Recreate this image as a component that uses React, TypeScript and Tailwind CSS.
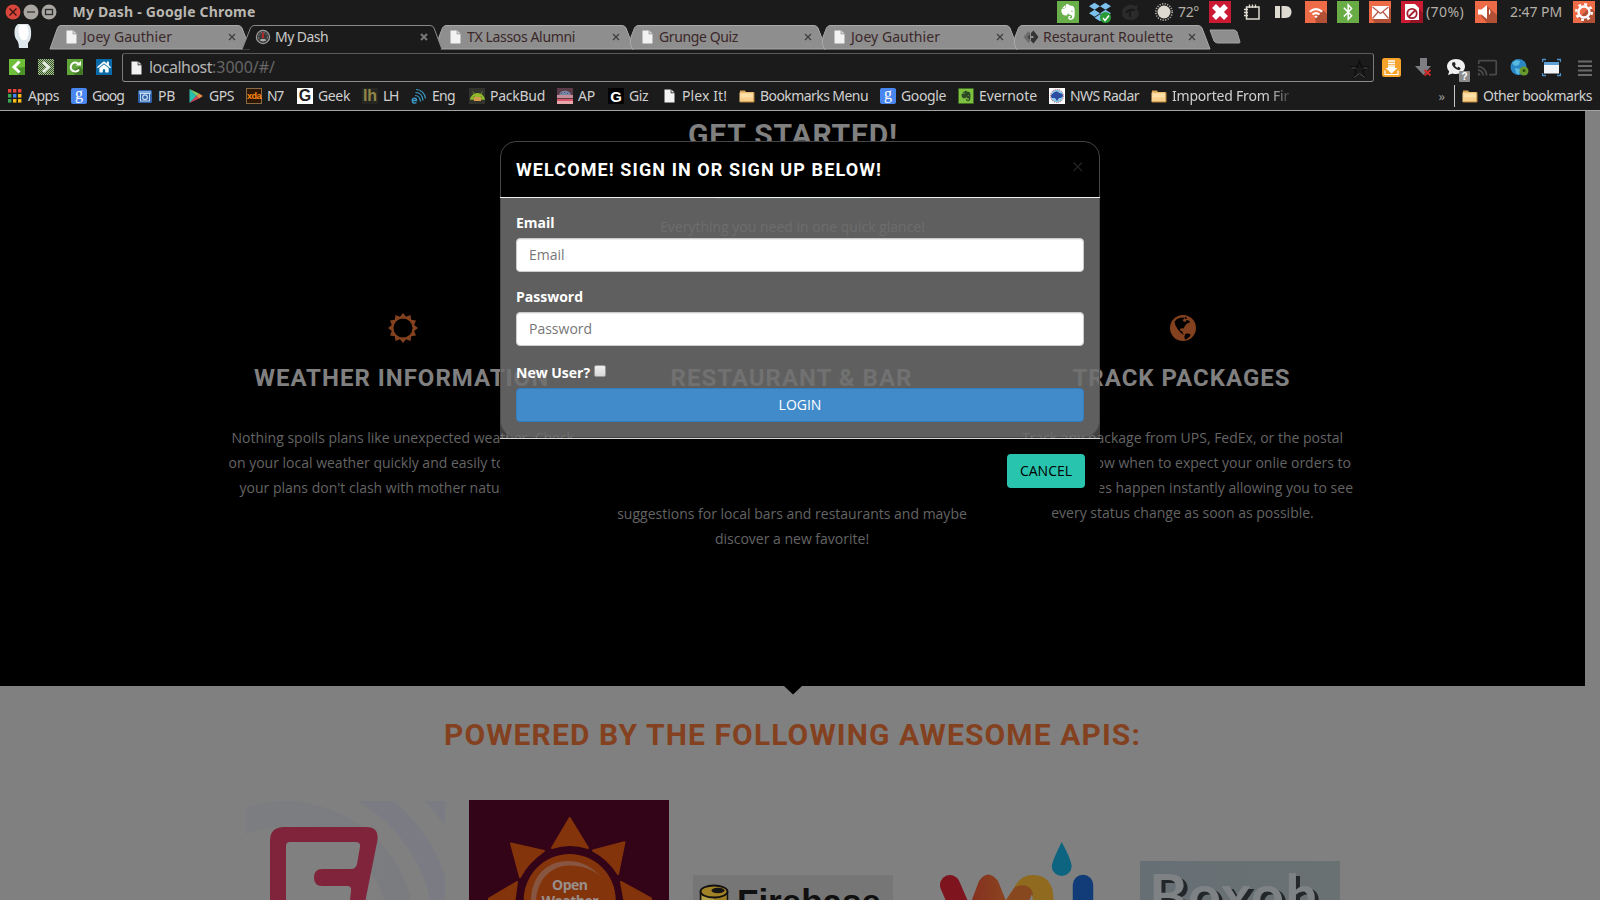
import { useLayoutEffect, useRef, type ReactNode } from "react";
import {
  FaAndroid,
  FaBluetoothB,
  FaDropbox,
  FaEvernote,
  FaHome,
  FaWhatsapp,
} from "react-icons/fa";
import { MdCast } from "react-icons/md";

/* Text whose letter spacing is adjusted so that it fills a given width. */
function Fit({ w, children, className = "" }: { w: number; children: string; className?: string }) {
  const ref = useRef<HTMLSpanElement>(null);
  useLayoutEffect(() => {
    const el = ref.current;
    if (!el) return;
    el.style.letterSpacing = "0px";
    const natural = el.getBoundingClientRect().width;
    el.style.letterSpacing = `${(w - natural) / children.length}px`;
  }, [w, children]);
  return (
    <span ref={ref} className={`inline-block shrink-0 whitespace-pre ${className}`}>
      {children}
    </span>
  );
}

function Doc({ className = "" }: { className?: string }) {
  return (
    <svg viewBox="0 0 11 14" className={`h-[14px] w-[11px] shrink-0 ${className}`}>
      <path d="M0.5 0.5h6.2v3.8h3.8v9.2h-10z" fill="#f2f2f2" />
      <path d="M7.4 0.4l3.2 3.2H7.4z" fill="#d8d8d8" />
    </svg>
  );
}

function Folder() {
  return (
    <svg viewBox="0 0 16 16" className="size-4 shrink-0">
      <path d="M1 2.5h5l1 1.5h7.5v9.500H1z" fill="#d9a558" />
      <path d="M0.500 4.500h14.500v9.500H0.500z" fill="#f9d08b" />
      <path d="M1.500 5.500h12.500v4H1.500z" fill="#fde0a8" />
      <path d="M15 4.500v9.500H1" stroke="#b98236" fill="none" />
    </svg>
  );
}

function GoogleIcon() {
  return (
    <span className="flex size-4 items-center justify-center rounded-[2px] bg-[#4a86f0] pb-[5px] font-['Liberation_Serif',serif] text-[16px] leading-none text-white">
      g
    </span>
  );
}

const appDots = ["#e8453c", "#e8453c", "#e8453c", "#3aa757", "#4285f4", "#f9bc15", "#3aa757", "#f9bc15", "#f9bc15"];

const bookmarks: { label: string; w: number; box: string; icon: ReactNode }[] = [
  {
    label: "Apps", w: 31, box: "w-[64px]",
    icon: (
      <svg viewBox="0 0 16 16" className="size-4">
        {appDots.map((c, i) => (
          <rect key={i} x={1 + (i % 3) * 5} y={1 + Math.floor(i / 3) * 5} width="3.400" height="3.600" fill={c} />
        ))}
      </svg>
    ),
  },
  { label: "Goog", w: 32, box: "w-[66px]", icon: <GoogleIcon /> },
  {
    label: "PB", w: 17, box: "w-[51px]",
    icon: (
      <svg viewBox="0 0 16 16" className="size-4">
        <rect x="1" y="2" width="14" height="13" rx="1.500" fill="#2f62a8" />
        <rect x="2" y="3" width="12" height="3" fill="#7fa8da" />
        <rect x="3.500" y="5.500" width="9" height="7.500" fill="none" stroke="#c4dcf5" />
        <circle cx="8" cy="9.300" r="2.400" fill="none" stroke="#c4dcf5" strokeWidth="1.200" />
      </svg>
    ),
  },
  {
    label: "GPS", w: 25, box: "w-[58px]",
    icon: (
      <svg viewBox="0 0 16 16" className="size-4">
        <path d="M1.500 1v14l7-7z" fill="#2bbfb0" />
        <path d="M1.500 1l7 7 2.500-2.400z" fill="#7dd36a" />
        <path d="M1.500 15l7-7 2.500 2.400z" fill="#d6435f" />
        <path d="M11 5.600L8.500 8l2.500 2.400 4-2.400z" fill="#e8894a" />
      </svg>
    ),
  },
  {
    label: "N7", w: 16, box: "w-[51px]",
    icon: <span className="flex size-4 items-center justify-center border border-[#8a6a42] bg-[#2d1703] font-['Liberation_Sans',sans-serif] text-[9px] font-bold tracking-[-0.5px] text-[#ff8a10]">xda</span>,
  },
  {
    label: "Geek", w: 32, box: "w-[65px]",
    icon: <span className="flex size-4 items-center justify-center bg-white font-['Liberation_Sans',sans-serif] text-[16px] leading-none font-bold text-[#222]">G</span>,
  },
  {
    label: "LH", w: 15, box: "w-[49px]",
    icon: <span className="flex size-4 items-center justify-center bg-[#262622] font-['Liberation_Sans',sans-serif] text-[16px] leading-none font-bold text-[#8f8647]">lh</span>,
  },
  {
    label: "Eng", w: 23, box: "w-[58px]",
    icon: (
      <svg viewBox="0 0 16 16" className="size-4" fill="none" stroke="#3a9cc8">
        <path d="M1.300 12.500h4.200c0-3-4.300-3.200-4.300 0 0 3 3 2.900 4.200 2" strokeWidth="1.400" />
        <path d="M4 7.500c3 0 5 2 5.500 6M4.500 4.500c4 0 7 3 7.500 8M5 1.500c5 0 9 4 9.500 9" strokeWidth="1.200" />
      </svg>
    ),
  },
  {
    label: "PackBud", w: 55, box: "w-[88px]",
    icon: (
      <span className="relative flex size-4 items-center justify-center bg-[#33332e]">
        <FaAndroid className="size-[15px] text-[#8fb82a]" />
        <span className="absolute top-[9px] left-[5px] h-[4px] w-[7px] bg-[#d69a4c]" />
      </span>
    ),
  },
  {
    label: "AP", w: 17, box: "w-[51px]",
    icon: (
      <svg viewBox="0 0 16 16" className="size-4">
        <rect width="16" height="16" fill="#5b3b48" />
        <path d="M2 8c0-7 12-7 12 0z" fill="#7885a3" />
        <path d="M4 5h1v1H4zM7 4h1v1H7zM10 5h1v1h-1z" fill="#45506b" />
        <rect y="7" width="16" height="3" fill="#c58d99" />
        <rect y="11" width="16" height="2" fill="#d9556a" />
        <rect y="13" width="16" height="3" fill="#e7a9ae" />
      </svg>
    ),
  },
  {
    label: "Giz", w: 19, box: "w-[53px]",
    icon: <span className="flex size-4 items-center justify-center bg-black font-['Liberation_Sans',sans-serif] text-[15px] leading-none font-bold text-white">G</span>,
  },
  { label: "Plex It!", w: 45, box: "w-[78px]", icon: <span className="flex w-4 justify-center"><Doc /></span> },
  { label: "Bookmarks Menu", w: 108, box: "w-[141px]", icon: <Folder /> },
  { label: "Google", w: 45, box: "w-[78px]", icon: <GoogleIcon /> },
  {
    label: "Evernote", w: 58, box: "w-[91px]",
    icon: (
      <span className="flex size-4 items-center justify-center rounded-[1px] border border-[#3f6d20] bg-[#7fc241]">
        <FaEvernote className="size-3 text-[#2d4a26]" />
      </span>
    ),
  },
  {
    label: "NWS Radar", w: 69, box: "w-[102px]",
    icon: (
      <svg viewBox="0 0 16 16" className="size-4">
        <rect width="16" height="16" fill="#fff" />
        <circle cx="8" cy="8" r="6.500" fill="#8fcbe8" stroke="#d5505a" strokeDasharray="1 1" />
        <path d="M2 8.500c0-2.500 2.500-3 3-4 1.500-1.500 4.500-1 5 .5 2.500 0 4 1 4 3l-2 2H10L8 13 6 10H3z" fill="#2b4ca0" />
      </svg>
    ),
  },
  { label: "Imported From Fir", w: 117, box: "w-[139px] [mask-image:linear-gradient(to_right,#000_118px,transparent_144px)]", icon: <Folder /> },
];

const tabs = [
  { label: "Joey Gauthier", w: 89, icon: "doc" },
  { label: "My Dash", w: 53, icon: "dash" },
  { label: "TX Lassos Alumni", w: 108, icon: "doc" },
  { label: "Grunge Quiz", w: 79, icon: "doc" },
  { label: "Joey Gauthier", w: 89, icon: "doc" },
  { label: "Restaurant Roulette", w: 130, icon: "diamond" },
];

function TabIcon({ kind }: { kind: string }) {
  if (kind === "doc") return <span className="flex w-[17px]"><Doc /></span>;
  if (kind === "dash")
    return (
      <svg viewBox="0 0 16 16" className="-ml-[3px] mr-[4px] size-4 shrink-0">
        <circle cx="8" cy="8" r="6.600" fill="#3a3a3a" stroke="#9b9b9b" strokeWidth="1.200" />
        <circle cx="8" cy="8" r="4.500" fill="none" stroke="#888" strokeDasharray="1.500 1.500" />
        <path d="M7.400 3l1.200 0 .4 6H7z" fill="#c62a2a" />
        <rect x="5.500" y="10" width="5" height="2" fill="#aaa" />
      </svg>
    );
  return (
    <svg viewBox="0 0 16 16" className="-ml-[3px] mr-1 size-4 shrink-0">
      <path d="M5.500 2L0.500 8l5 6 2-2.500L4.500 8l3-3.500z" fill="#6c6c6c" />
      <path d="M10.500 1.500L15.500 8l-5 6.500L8 12V9h2.500V7H8V4z" fill="#333" />
      <path d="M7 5v6L4.300 8z" fill="#444" />
    </svg>
  );
}

function TabStrip() {
  return (
    <div className="flex h-[25px] items-stretch">
      <div className="flex w-12 justify-start pl-[14px]">
        <svg viewBox="0 0 18 24" className="-mt-px h-6 w-[18px]">
          <path d="M4 0h10c3 2 3.500 7 3 12-.5 4-2 6-3 7v5H5q0-4-1.500-7C1 14 .5 12 .5 8S1.500 2 4 0z" fill="#dfe8ec" />
          <path d="M6 1h6c3 3 3 10 1 14-2 2-5 1-6 0C4 10 4 4 6 1z" fill="#fff" />
        </svg>
      </div>
      {tabs.map((t, i) => {
        const active = i === 1;
        return (
          <div
            key={i}
            className={`relative flex w-[192px] shrink-0 items-center pl-[18px] ${active ? "z-30" : i === 0 ? "z-20" : "z-10"}`}
          >
            <svg viewBox="0 0 204 25" className="absolute top-0 left-0 h-[25px] w-[204px]">
              <path
                d={
                  active
                    ? "M2 24.500L10.500 3Q12 0.500 14 0.500H190Q193 0.500 194 3L202 24.500"
                    : i === 0
                      ? "M2 24L9.500 3Q10.500 0.500 13 0.500H190Q193 0.500 194 3L202 24z"
                      : "M8 24Q5 18 7 12L10.500 3Q12 0.500 14 0.500H190Q193 0.500 194 3L202 24z"
                }
                fill={active ? "#1b1b1b" : "#8e8e8e"}
                stroke={active ? "#8a8a8a" : "#a9a9a9"}
                strokeWidth="1"
              />
            </svg>
            <div className="relative flex h-full w-full items-center pb-px">
              <TabIcon kind={t.icon} />
              <Fit w={t.w} className={`text-[14px] leading-5 ${active ? "text-[#c9c9c9]" : "text-[#3b2829]"}`}>{t.label}</Fit>
              <span className="flex-1" />
              <svg viewBox="0 0 8 8" className="mr-1 size-2">
                <path d="M1 1l6 6M7 1L1 7" stroke={active ? "#777" : "#3f3f3f"} strokeWidth={active ? 2 : 1.300} />
              </svg>
            </div>
          </div>
        );
      })}
      <svg viewBox="0 0 32 16" className="mt-[4px] ml-[9px] h-4 w-8">
        <path d="M1 1h24q2 0 3 2l3 10q0 1-1 1H9q-3 0-4-2z" fill="#8e8e8e" stroke="#a2a2a2" />
      </svg>
    </div>
  );
}

function Tile({ color, fold, children, className = "" }: { color: string; fold?: string; children: ReactNode; className?: string }) {
  return (
    <svg viewBox="0 0 22 22" className={`size-[22px] shrink-0 ${className}`}>
      <rect width="22" height="22" fill={color} />
      {fold && <path d={fold} fill="#000" opacity="0.25" />}
      {children}
    </svg>
  );
}

function Tray() {
  return (
    <div className="flex items-center text-[14px] leading-5 text-[#b3afa7]">
      <span className="flex size-[22px] items-center justify-center bg-[#69b04a]">
        <FaEvernote className="size-[18px] text-white" />
      </span>
      <span className="relative ml-[10px] flex size-[22px] items-center justify-center">
        <FaDropbox className="size-[22px] text-[#7cc0ee]" />
        <span className="absolute right-0 bottom-0 flex size-[11px] items-center justify-center rounded-full bg-[#2b9a35]">
          <svg viewBox="0 0 8 8" className="size-2"><path d="M1 4l2 2.500L7 1.500" stroke="#fff" strokeWidth="1.500" fill="none" /></svg>
        </span>
      </span>
      <svg viewBox="0 0 20 20" className="ml-[10px] size-5">
        <path d="M1 10a9 8 0 0 1 14-6l2-2-1 5c4 4 1 11-6 11S1 15 1 10z" fill="#2b2b2b" />
        <path d="M5 11c2-3 5-4 9-3M9 9v6" stroke="#161616" strokeWidth="1.500" fill="none" />
      </svg>
      <svg viewBox="0 0 20 20" className="ml-[13px] size-5">
        <circle cx="10" cy="10" r="6.500" fill="#dedad2" />
        <circle cx="10" cy="10" r="8.200" fill="none" stroke="#b5b1a8" strokeWidth="1.600" strokeDasharray="1.200 1.400" />
      </svg>
      <Fit w={21} className="ml-[4px]">72°</Fit>
      <Tile color="#cb1b32" className="ml-[10px]">
        <path d="M5 5l12 12M17 5L5 17" stroke="#fff" strokeWidth="5.500" />
      </Tile>
      <svg viewBox="0 0 18 18" className="ml-[12px] size-[18px]">
        <path d="M3.500 16V4h12.500v12z" fill="none" stroke="#dedad2" strokeWidth="1.500" />
        <path d="M1 6.500h4M1 9.500h4M1 12.500h4M6.500 1.500V5M9.500 1.500V5M12.500 1.500V5" stroke="#dedad2" strokeWidth="1.300" />
      </svg>
      <svg viewBox="0 0 17 14" className="ml-[14px] h-[14px] w-[17px]">
        <rect y="1" width="5" height="12" fill="#dedad2" />
        <path d="M6.500 1h4c8 0 8 12 0 12h-4z" fill="#dedad2" />
      </svg>
      <Tile color="#ee6b47" fold="M18 9l4 4v9H11l-1-5z" className="ml-[13px]">
        <path d="M4 10q7-6 14 0l-1.600 1.600q-5.400-4.500-10.800 0z" fill="#fff" />
        <path d="M6.800 12.800q4.200-3.400 8.400 0l-1.500 1.500q-2.700-2-5.400 0zM9.200 15.300q1.800-1.300 3.600 0L11 17.200z" fill="#fff" />
      </Tile>
      <span className="ml-[10px] flex size-[22px] items-center justify-center bg-[#69ab45]">
        <FaBluetoothB className="size-[18px] text-white" />
      </span>
      <Tile color="#ee6b47" fold="M20 6l2 2v14H6l-3-4z" className="ml-[10px]">
        <rect x="3" y="5" width="17" height="13" fill="#fff" />
        <path d="M3.500 6l8 6.500 8-6.500M3.500 17.500L9 11M19.500 17.500L14 11" fill="none" stroke="#b65a48" strokeWidth="1.200" />
      </Tile>
      <Tile color="#cb1b32" fold="M18 8l4 4v10H8z" className="ml-[10px]">
        <path d="M4 3h10l4 4v12H4z" fill="#fff" />
        <circle cx="11" cy="12.500" r="4.700" fill="none" stroke="#a21f30" strokeWidth="1.800" />
        <path d="M8 15.500l6-6" stroke="#a21f30" strokeWidth="1.800" />
      </Tile>
      <Fit w={38} className="ml-[3px]">(70%)</Fit>
      <Tile color="#ee6b47" fold="M12 5l10 9v8H12l-6-7z" className="ml-[11px]">
        <path d="M3 8.500h3.500L12 4v14l-5.500-4.500H3zM14 8q3 3 0 6z" fill="#fff" />
      </Tile>
      <Fit w={52} className="ml-[13px]">2:47 PM</Fit>
      <Tile color="#ee6b47" fold="M17 6l5 5v11H10l-4-5z" className="ml-[11px]">
        <circle cx="11" cy="11" r="5.500" fill="none" stroke="#fff" strokeWidth="2.400" />
        <circle cx="11" cy="11" r="7.800" fill="none" stroke="#fff" strokeWidth="2.400" strokeDasharray="2.800 3.330" />
      </Tile>
    </div>
  );
}

function TitleBar() {
  return (
    <div className="flex h-6 items-center justify-between pr-[5px] pl-[5px]">
      <div className="flex items-center">
        <svg viewBox="0 0 53 16" className="h-4 w-[53px]">
          <circle cx="8" cy="8" r="7.500" fill="#d9463c" />
          <path d="M4.500 4.500l7 7M11.500 4.500l-7 7" stroke="#3a1512" strokeWidth="1.400" />
          <circle cx="26" cy="8" r="7.500" fill="#a9a6a1" />
          <path d="M22 8h8" stroke="#444" strokeWidth="1.500" />
          <circle cx="44" cy="8" r="7.500" fill="#a9a6a1" />
          <rect x="40.500" y="5.500" width="7" height="5" fill="none" stroke="#2c2c2c" strokeWidth="1.300" />
        </svg>
        <Fit w={183} className="ml-[14.500px] text-[14px] leading-5 font-bold text-[#b9b6b0]">My Dash - Google Chrome</Fit>
      </div>
      <Tray />
    </div>
  );
}

function Toolbar() {
  return (
    <div className="flex h-8 items-start pt-[3px] pr-2 pl-[9px]">
      <div className="flex gap-[13px] pt-[6px]">
        <svg viewBox="0 0 16 16" className="size-4">
          <rect width="16" height="16" fill="#6fbe3a" />
          <path d="M16 8v8H9L5 9z" fill="#4b9427" />
          <path d="M10.500 2.500L5 8l5.500 5.500" stroke="#fff" strokeWidth="3" fill="none" />
        </svg>
        <svg viewBox="0 0 16 16" className="size-4">
          <defs>
            <pattern id="dither" width="2" height="2" patternUnits="userSpaceOnUse">
              <rect width="2" height="2" fill="#3a4a30" />
              <rect width="1" height="1" fill="#a3c98a" />
              <rect x="1" y="1" width="1" height="1" fill="#a3c98a" />
            </pattern>
          </defs>
          <rect width="16" height="16" fill="url(#dither)" />
          <path d="M5 3l5.500 5L5 13" stroke="#e6ece2" strokeWidth="3" fill="none" />
        </svg>
        <svg viewBox="0 0 16 16" className="size-4">
          <rect width="16" height="16" fill="#5fa53a" />
          <path d="M13 8l3 3v5H8l-3-4z" fill="#417a25" />
          <path d="M12 10.500A4.500 4.500 0 1 1 11.500 5" stroke="#fff" strokeWidth="2" fill="none" />
          <path d="M8.500 6.500H14V2z" fill="#fff" />
        </svg>
        <span className="flex size-4 items-center justify-center bg-[#0b6ba8]">
          <FaHome className="size-[14px] text-white" />
        </span>
      </div>
      <div className="ml-[10px] flex h-[29px] w-[1252px] shrink-0 items-center rounded-[3px] border border-t-[#5a5a5a] border-r-[#7a7a7a] border-b-[#8c8c8c] border-l-[#7a7a7a] pr-[4px] pl-[8px]">
        <Doc />
        <span className="-mt-px ml-[7px] flex text-[16px]">
          <Fit w={63} className="text-[#b4b4b4]">localhost</Fit>
          <Fit w={63} className="text-[#666]">:3000/#/</Fit>
        </span>
        <span className="flex-1" />
        <svg viewBox="0 0 19 19" className="mt-1 size-[19px]">
          <path d="M9.500 1l2.300 6H18l-5 3.800L15 17.500l-5.500-4-5.500 4 2-6.700L1 7h6.200z" fill="none" stroke="#0d0d0d" strokeWidth="1.300" />
          <path d="M4 17.500l5.500-4 5.500 4M1.500 8h4M13.500 8h4" fill="none" stroke="#555" />
        </svg>
      </div>
      <div className="flex items-start pt-[5px] pl-2">
        <span className="w-8">
          <svg viewBox="0 0 19 19" className="size-[19px]">
            <rect width="19" height="19" rx="2.500" fill="#f6a32c" />
            <path d="M6 3h7M6 5.500h7M6 8h7" stroke="#fff" strokeWidth="1.700" />
            <path d="M3 12.500v4h13v-4" fill="none" stroke="#fff" strokeWidth="1.200" />
            <path d="M6 9h7v1h2.500l-6 5.500-6-5.500H6z" fill="#fff" />
          </svg>
        </span>
        <span className="w-8">
          <svg viewBox="0 0 19 19" className="size-[19px]">
            <path d="M6 0h7v8h4l-7.500 9L1 8h5z" fill="#7d7f83" />
            <path d="M10.500 12l6 5.500M16.500 12l-6 5.500" stroke="#d22b2b" strokeWidth="2" />
          </svg>
        </span>
        <span className="w-8">
          <span className="relative block h-6 w-6">
            <svg viewBox="0 0 20 18" className="h-[18px] w-5">
              <path d="M10 1c5 0 9 3 9 7.500S15 16 10 16q-2 0-3.500-.6L2 17l1.200-3.500Q1 11.500 1 8.500C1 4 5 1 10 1z" fill="#f0f0f0" />
              <path d="M6.500 4.500c-1 1-.5 3 1.500 5s4.500 3 5.800 2.200l.9-1.500-2.200-1.400-1.200.9c-1-.4-2-1.300-2.400-2.400l.9-1L8.600 4z" fill="#222" />
            </svg>
            <span className="absolute right-0 bottom-0 flex size-[11px] items-center justify-center rounded-[1px] bg-[#8c8c8c] font-['Liberation_Sans',sans-serif] text-[10px] font-bold text-white">?</span>
          </span>
        </span>
        <span className="w-8">
          <MdCast className="-mt-px -ml-px size-[21px] text-[#4a4a4a]" />
        </span>
        <span className="w-8">
          <svg viewBox="0 0 19 19" className="size-[19px]">
            <circle cx="8.500" cy="9" r="8" fill="#2b86c5" />
            <path d="M2 5l4-3 4 1-1 4-4 1zM5 10l5 1-1 6-3-2z" fill="#58b9df" />
            <circle cx="14" cy="13" r="4.500" fill="#6a9a2b" />
            <circle cx="14" cy="12.500" r="1.500" fill="#2f4d10" />
          </svg>
        </span>
        <span className="w-9">
          <svg viewBox="0 0 19 19" className="size-[19px]">
            <path d="M.5 4V1.500H4M15 1.500h3.500V4M.5 15v2.500H4M15 17.500h3.500V15" fill="none" stroke="#4e8fc7" strokeWidth="1.300" />
            <rect x="2" y="4" width="15" height="11.500" fill="#f1f5f9" />
            <rect x="2" y="4" width="15" height="3" fill="#5fa0d6" />
          </svg>
        </span>
        <svg viewBox="0 0 14 16" className="mt-[2px] h-4 w-[14px]">
          <path d="M0 1.500h14M0 6h14M0 10.500h14M0 15h14" stroke="#6a6a6a" strokeWidth="2" />
        </svg>
      </div>
    </div>
  );
}

function BookmarkBar() {
  return (
    <div className="flex h-[29px] items-center border-b border-[#a4a4a4] pr-2 pl-[7px] text-[14px] leading-5 text-[#d0d0d0]">
      {bookmarks.map((b, i) => (
        <div key={i} className={`flex shrink-0 items-center gap-[5px] ${b.box}`}>
          {b.icon}
          <Fit w={b.w} className="-mt-px">{b.label}</Fit>
        </div>
      ))}
      <span className="flex-1" />
      <span className="mr-[9px] text-[13px] text-[#999]">»</span>
      <span className="mr-[7px] h-[22px] w-px bg-[#c4c4c4]" />
      <Folder />
      <Fit w={109} className="-mt-px ml-[5px]">Other bookmarks</Fit>
    </div>
  );
}

const sunPoints = Array.from({ length: 24 }, (_, i) => {
  const r = i % 2 === 0 ? 15 : 11.600;
  const a = (i * Math.PI) / 12 - Math.PI / 2;
  return `${(16 + r * Math.cos(a)).toFixed(2)} ${(16 + r * Math.sin(a)).toFixed(2)}`;
}).join("L");

function SunIcon() {
  return (
    <svg viewBox="0 0 32 32" className="size-8">
      <path fillRule="evenodd" fill="#84411f" d={`M${sunPoints}zM16 6.500a9.500 9.500 0 1 0 0 19a9.500 9.500 0 1 0 0-19z`} />
    </svg>
  );
}

function GlobeIcon() {
  return (
    <svg viewBox="0 0 32 32" className="size-8">
      <circle cx="16" cy="16" r="13" fill="#84411f" />
      <path d="M7.500 9.500L10 7l4-1.500 1.500.5 1-.8 1 1.300-1.800 1.500.8 1.500 1.700.5 1.500-2 3.200 1-.4 1.600-2.500 1-2 2.200-1.500 2.700-1.500-.3-2 .6.300 2 1.700.2 1 2.500 1 .8-1 .3-2.500-2-3-3.500-2.200-4z" fill="#000" />
      <path d="M18 22.500l2-1.300 3.500 1-.6 2-3 2.800-1.900.6-.6-2.600z" fill="#000" />
      <path d="M17.500 5.500l1.500-.8 1 1.800-1.500.5z" fill="#000" />
    </svg>
  );
}

const h4 = "mt-[21px] h-[26px] whitespace-nowrap pr-[2px] text-center font-['Roboto',sans-serif] text-[24px] leading-[26px] font-bold tracking-[1px] text-[#808080]";
const para = "mt-[34px] flex flex-col whitespace-nowrap text-[14px] leading-[25px] text-[#646464]";

function Features() {
  return (
    <section className="flex h-[575px] w-[1585px] flex-col bg-black">
      <h2 className="mt-[6px] h-9 pl-px text-center font-['Roboto',sans-serif] text-[30px] leading-9 font-bold text-[#808080]">
        <Fit w={210}>GET STARTED!</Fit>
      </h2>
      <div className="mt-[45px] h-px w-[154px] self-center bg-[#146357]" />
      <p className="mt-[15px] h-[25px] text-center text-[14px] leading-[25px] text-[#646464]">Everything you need in one quick glance!</p>
      <div className="mt-[73px] flex pl-[207.500px]">
        <div className="w-[390px]">
          <div className="flex justify-center"><SunIcon /></div>
          <h3 className={h4}>WEATHER INFORMATION</h3>
          <div className={para}>
            <span className="pl-6">Nothing spoils plans like unexpected weather. Check</span>
            <span className="pl-[21px]">on your local weather quickly and easily to</span>
            <span className="pl-8">your plans don't clash with mother nature</span>
          </div>
        </div>
        <div className="w-[390px]">
          <div className="h-8" />
          <h3 className={h4}>RESTAURANT &amp; BAR</h3>
          <div className={`${para} items-center pt-[76px] pr-px`}>
            <span>suggestions for local bars and restaurants and maybe</span>
            <span>discover a new favorite!</span>
          </div>
        </div>
        <div className="w-[390px]">
          <div className="flex justify-center"><GlobeIcon /></div>
          <h3 className={h4}>TRACK PACKAGES</h3>
          <div className={`${para} items-end`}>
            <span className="pr-[34.500px]">Track any package from UPS, FedEx, or the postal</span>
            <span className="pr-[26.500px]">know when to expect your onlie orders to</span>
            <span className="pr-[24.500px]">updates happen instantly allowing you to see</span>
            <span className="self-center">every status change as soon as possible.</span>
          </div>
        </div>
      </div>
    </section>
  );
}

function Foursquare() {
  return (
    <svg viewBox="0 0 200 99" className="mt-[1px] h-[99px] w-[200px]">
      <defs>
        <linearGradient id="fade" x1="0" x2="1">
          <stop offset="0" stopColor="#7d7e82" />
          <stop offset="1" stopColor="#77797f" />
        </linearGradient>
      </defs>
      <g fill="none" stroke="#7b7c83">
        <circle cx="40" cy="130" r="159" strokeWidth="21" />
        <circle cx="40" cy="130" r="203" strokeWidth="24" />
        <circle cx="40" cy="130" r="117" strokeWidth="26" stroke="url(#fade)" opacity="0.6" />
      </g>
      <path d="M25 99V40q0-14 14-14h82q13 0 11.500 13L120.500 99z" fill="#80243b" />
      <path d="M41 99V45q0-4 4-4h65q6 0 5 5l-3 17q-1 5-6 5H77q-8 0-8 8.500T77 85h25q5 0 4 5l-1 9z" fill="#808080" />
    </svg>
  );
}

function OpenWeather() {
  return (
    <svg viewBox="0 0 200 100" className="h-[100px] w-[200px]">
      <rect width="200" height="100" fill="#330318" />
      <g fill="#84340a" stroke="#84340a" strokeWidth="2" strokeLinejoin="round">
        <path d="M100.700 18L119 48Q101 42 83 48z" />
        <path d="M42 43.500L75 51Q59 62 51 77z" />
        <path d="M155.500 42.300L149 74Q140 59 124 50.500z" />
        <path d="M48 82L20 98.500V104H45z" />
        <path d="M152 82L182 98.500V104H156z" />
      </g>
      <circle cx="100.700" cy="100" r="46" fill="#84340a" />
      <path d="M62 104C61 76 78 61 99 61c14 0 24 6 32.500 15.500C123 69 113 65.500 101 65.500 82 65.500 67 80 67 104z" fill="#875540" />
      <text x="101" y="90" textAnchor="middle" fontFamily="Open Sans, sans-serif" fontWeight="700" fontSize="14" textLength="36" fill="#99908e">Open</text>
      <text x="101" y="106" textAnchor="middle" fontFamily="Open Sans, sans-serif" fontWeight="700" fontSize="14" textLength="57" fill="#99908e">Weather</text>
    </svg>
  );
}

function Firebase() {
  return (
    <div className="mt-[75px] flex h-[60px] w-[200px] items-start overflow-hidden bg-[#767676] pl-[6px]">
      <svg viewBox="0 0 30 32" className="mt-[9px] h-8 w-[30px] shrink-0">
        <path d="M1.500 8v24h27V8z" fill="#9a7c25" stroke="#111" strokeWidth="1.500" />
        <path d="M3 12v12h12V14z" fill="#b5a14a" />
        <ellipse cx="15" cy="7.500" rx="13.500" ry="6" fill="#a18226" stroke="#111" strokeWidth="1.800" />
        <ellipse cx="19" cy="6.500" rx="6.500" ry="2.800" fill="#151515" />
      </svg>
      <span className="mt-[7px] ml-[8px] font-['Liberation_Sans',sans-serif] text-[35px] leading-[39px] font-bold text-[#101010]">Firebase</span>
    </div>
  );
}

function WuLogo() {
  return (
    <svg viewBox="0 0 200 100" className="h-[100px] w-[200px]">
      <defs>
        <linearGradient id="wuOrange" x1="0" x2="1">
          <stop offset="0" stopColor="#86301f" />
          <stop offset="1" stopColor="#8a4420" />
        </linearGradient>
      </defs>
      <path d="M33 85l16 37" stroke="#7d141e" strokeWidth="20" strokeLinecap="round" />
      <path d="M54.500 101L62 81q9-13 19 0l8 20z" fill="url(#wuOrange)" />
      <path d="M97 88q6-13 19-13 20 0 20.500 24v6H88z" fill="#8f6a1f" />
      <path d="M87 103L97 88q6-4 13-2 8 5 5 11l-3 8z" fill="#87481f" />
      <path d="M112 101l3-7 1 7z" fill="#808080" />
      <path d="M144.700 42Q154 59 154.700 66a10 10 0 1 1-20 0Q136 59 144.700 42z" fill="#0d6480" />
      <path d="M166 85v25" stroke="#123c78" strokeWidth="20.500" strokeLinecap="round" />
    </svg>
  );
}

function Boxoh() {
  return (
    <div className="mt-[61px] -ml-px h-[60px] w-[200px] overflow-hidden bg-linear-to-r from-[#666f74] to-[#697172] pl-[9px]">
      <Fit w={170} className="mt-[-2px] font-['Lato',sans-serif] text-[58px] leading-[70px] font-bold text-[#7e8284] [text-shadow:4px_3px_0_#23272a]">Boxoh</Fit>
    </div>
  );
}

function Apis() {
  return (
    <section className="relative h-[214px] w-[1585px] overflow-hidden bg-[#808080]">
      <svg viewBox="0 0 18 9" className="absolute top-0 left-[784px] h-[9px] w-[18px]">
        <path d="M0 0h18L9 8.500z" fill="#000" />
      </svg>
      <h2 className="mt-[31px] h-9 text-center font-['Roboto',sans-serif] text-[30px] leading-9 font-bold text-[#84411f]">
        <Fit w={697}>POWERED BY THE FOLLOWING AWESOME APIS:</Fit>
      </h2>
      <div className="mt-[47px] flex items-start gap-6 pl-[245px]">
        <Foursquare />
        <OpenWeather />
        <Firebase />
        <WuLogo />
        <Boxoh />
      </div>
    </section>
  );
}

const label = "block h-[20px] text-[14px] leading-[20px] font-bold text-white";
const input = "mt-[5px] block h-[34px] w-full rounded-[4px] border border-[#ccc] bg-white px-3 pb-[2px] text-[14px] shadow-[inset_0_1px_1px_rgba(0,0,0,0.075)] placeholder:text-[#777]";

function ModalHeader() {
  return (
    <header className="h-[57px] overflow-hidden border-b border-[#f0f0f0]">
      <div className="flex h-[60px] justify-between rounded-t-[16px] border border-[#444] bg-black pr-[15px] pl-[15px]">
        <h4 className="mt-[16px] h-6 font-['Roboto',sans-serif] text-[18px] leading-6 font-bold text-white">
          <Fit w={366}>WELCOME! SIGN IN OR SIGN UP BELOW!</Fit>
        </h4>
        <svg viewBox="0 0 12 12" className="mt-[19px] size-3">
          <path d="M1.500 1.500l8.500 8.500M10 1.500L1.500 10" stroke="#222" strokeWidth="1.400" />
        </svg>
      </div>
    </header>
  );
}

function ModalBody() {
  return (
    <div className="h-[241px] border-b border-[#d6d6d6] bg-[#808080]/50">
      <form className="h-[239px] rounded-b-[16px] border-x border-[#4a4a4a] bg-[#6b6b6b]/73 px-[15px] pt-[15px]">
        <label className={label}>Email</label>
        <input className={input} placeholder="Email" />
        <label className={`${label} mt-[15px]`}>Password</label>
        <input className={input} placeholder="Password" type="password" />
        <div className="mt-[15px] flex h-[22px] items-start">
          <span className="mt-[2px] text-[14px] leading-[20px] font-bold text-white">New User?</span>
          <span className="mt-[4px] ml-[4px] size-3 rounded-[2px] border border-[#9a9a9a] bg-linear-to-b from-[#eee] to-[#d8d8d8]" />
        </div>
        <button type="button" className="mt-[5px] block h-[34px] w-full rounded-[4px] border border-[#357ebd] bg-[#428bca] pb-[2px] text-[14px] text-white">
          LOGIN
        </button>
      </form>
    </div>
  );
}

function SignInModal() {
  return (
    <div className="absolute top-[141px] left-[500px] w-[600px]">
      <ModalHeader />
      <ModalBody />
      <footer className="flex h-[64px] items-start justify-end rounded-b-[16px] bg-black pt-[15px] pr-[15px]">
        <button type="button" className="h-[34px] w-[78px] rounded-[4px] bg-[#29c4ad] pb-[2px] text-[14px] text-black">CANCEL</button>
      </footer>
    </div>
  );
}

export default function App() {
  return (
    <div className="relative h-[900px] w-[1600px] overflow-hidden bg-[#808080] font-['Open_Sans',sans-serif]">
      <div className="h-[111px] bg-[#1b1b1b] font-['Noto_Sans',sans-serif]">
        <TitleBar />
        <div className="pt-px">
          <TabStrip />
        </div>
        <Toolbar />
        <BookmarkBar />
      </div>
      <Features />
      <Apis />
      <SignInModal />
    </div>
  );
}
